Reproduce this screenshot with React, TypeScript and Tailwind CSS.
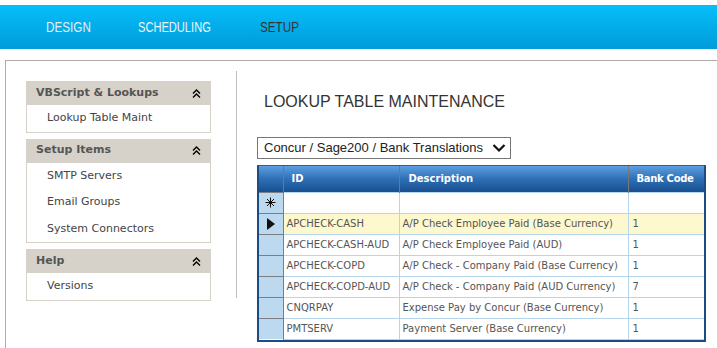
import React from "react";

const sections = [
  { title: "VBScript & Lookups", items: ["Lookup Table Maint"] },
  { title: "Setup Items", items: ["SMTP Servers", "Email Groups", "System Connectors"] },
  { title: "Help", items: ["Versions"] },
];

const rows = [
  { id: "APCHECK-CASH", desc: "A/P Check Employee Paid (Base Currency)", code: "1", current: true },
  { id: "APCHECK-CASH-AUD", desc: "A/P Check Employee Paid (AUD)", code: "1" },
  { id: "APCHECK-COPD", desc: "A/P Check - Company Paid (Base Currency)", code: "1" },
  { id: "APCHECK-COPD-AUD", desc: "A/P Check - Company Paid (AUD Currency)", code: "7" },
  { id: "CNQRPAY", desc: "Expense Pay by Concur (Base Currency)", code: "1" },
  { id: "PMTSERV", desc: "Payment Server (Base Currency)", code: "1" },
];

const navFont = { fontFamily: "'Liberation Sans', Arial, sans-serif" };
const tahoma = { fontFamily: "'DejaVu Sans', Verdana, sans-serif" };
const arial = { fontFamily: "'Liberation Sans', Arial, sans-serif" };

const Collapse = () => (
  <svg width="9" height="9" viewBox="0 0 9 9" className="text-black">
    <polyline points="1,4.5 4.5,1 8,4.5" fill="none" stroke="currentColor" strokeWidth="1.4" />
    <polyline points="1,8.5 4.5,5 8,8.5" fill="none" stroke="currentColor" strokeWidth="1.4" />
  </svg>
);

const NewRowStar = () => (
  <svg width="11" height="11" viewBox="0 0 11 11">
    <g stroke="#111" strokeWidth="1">
      <line x1="5.5" y1="0.5" x2="5.5" y2="10.5" />
      <line x1="0.5" y1="5.5" x2="10.5" y2="5.5" />
      <line x1="2" y1="2" x2="9" y2="9" />
      <line x1="9" y1="2" x2="2" y2="9" />
    </g>
  </svg>
);

const Pointer = () => (
  <svg width="8" height="12" viewBox="0 0 8 12">
    <polygon points="0,0 8,6 0,12" fill="#111" />
  </svg>
);

const Sidebar = () => (
  <div className="w-[185px] flex flex-col gap-[6px]" style={tahoma}>
    {sections.map(s => (
      <div key={s.title}>
        <div className="h-[24px] bg-[#d6d2ca] flex items-center justify-between pl-[10px] pr-[10px]">
          <span className="text-[11px] font-bold text-[#555]">{s.title}</span>
          <Collapse />
        </div>
        <div className="border border-t-0 border-[#d6d2ca] bg-white">
          {s.items.map(item => (
            <div key={item} className="h-[26.5px] flex items-center pl-[20px] text-[11px] text-[#444]">
              {item}
            </div>
          ))}
        </div>
      </div>
    ))}
  </div>
);

const LookupGrid = () => (
  <div className="w-[449px] border-2 border-t border-[#1d4c84] border-t-[#555] bg-white" style={tahoma}>
    <table className="w-full border-collapse table-fixed">
      <colgroup>
        <col className="w-[24px]" />
        <col className="w-[116px]" />
        <col className="w-[229px]" />
        <col />
      </colgroup>
      <thead>
        <tr className="h-[26px] bg-gradient-to-b from-[#5d9fe0] via-[#2f6fb5] to-[#174f90] text-white text-[10px] font-bold text-left">
          <th className="border-r border-[#777]" />
          <th className="border-r border-[#777] pl-[8px] font-bold">ID</th>
          <th className="border-r border-[#777] pl-[9px] font-bold">Description</th>
          <th className="pl-[8px] font-bold tracking-[-0.3px]">Bank Code</th>
        </tr>
      </thead>
      <tbody className="text-[10px] text-[#555]">
        <tr className="h-[21px]">
          <td className="bg-[#bcd9ef] border-t border-r border-[#7a7f86]">
            <div className="flex justify-center"><NewRowStar /></div>
          </td>
          <td className="border border-l-0 border-[#b3d5ee]" />
          <td className="border border-[#b3d5ee]" />
          <td className="border border-r-0 border-[#b3d5ee]" />
        </tr>
        {rows.map(r => (
          <tr key={r.id} className={r.current ? "h-[21px] bg-[#fdf8cd]" : "h-[21px]"}>
            <td className="bg-[#bcd9ef] border-t border-r border-[#7a7f86]">
              {r.current && <div className="flex justify-center"><Pointer /></div>}
            </td>
            <td className="border border-l-0 border-[#b3d5ee] pl-[3px] whitespace-nowrap">{r.id}</td>
            <td className="border border-[#b3d5ee] pl-[3px] whitespace-nowrap">{r.desc}</td>
            <td className="border border-r-0 border-[#b3d5ee] pl-[4px]">{r.code}</td>
          </tr>
        ))}
      </tbody>
    </table>
  </div>
);

export default function App() {
  return (
    <div className="w-[717px] h-[348px] bg-white overflow-hidden">
      <div className="h-[5px] bg-white" />
      <nav
        className="h-[44px] bg-gradient-to-b from-[#06bff9] to-[#009bd9] flex items-center pl-[46px] text-[15px]"
        style={navFont}
      >
        <span className="w-[92px] text-[#e4ecf0]"><span className="inline-block origin-left scale-x-[0.78]">DESIGN</span></span>
        <span className="w-[122px] text-[#eef3f6]"><span className="inline-block origin-left scale-x-[0.74]">SCHEDULING</span></span>
        <span className="text-[#333]"><span className="inline-block origin-left scale-x-[0.78]">SETUP</span></span>
      </nav>
      <div className="mt-[11px] ml-[5px] border-l border-t border-[#acacac] h-[300px]">
        <div className="flex mt-[10px]">
          <div className="pl-[20px] pr-[25px] pt-[10px] border-r border-[#bdbdbd] h-[227px]">
            <Sidebar />
          </div>
          <div className="pl-[20px] pt-[22px]" style={arial}>
            <h1 className="ml-[7px] text-[16px] leading-[18px] text-[#333]">LOOKUP TABLE MAINTENANCE</h1>
            <div className="mt-[26px] w-[254px] h-[22px] border border-[#767676] flex items-center justify-between pl-[6px] pr-[4px] text-[13px] text-[#222] whitespace-nowrap">
              <span>Concur / Sage200 / Bank Translations</span>
              <svg width="14" height="10" viewBox="0 0 14 10">
                <polyline points="1.5,2 7,7.5 12.5,2" fill="none" stroke="#111" strokeWidth="2.2" />
              </svg>
            </div>
            <div className="mt-[6px]">
              <LookupGrid />
            </div>
          </div>
        </div>
      </div>
    </div>
  );
}
